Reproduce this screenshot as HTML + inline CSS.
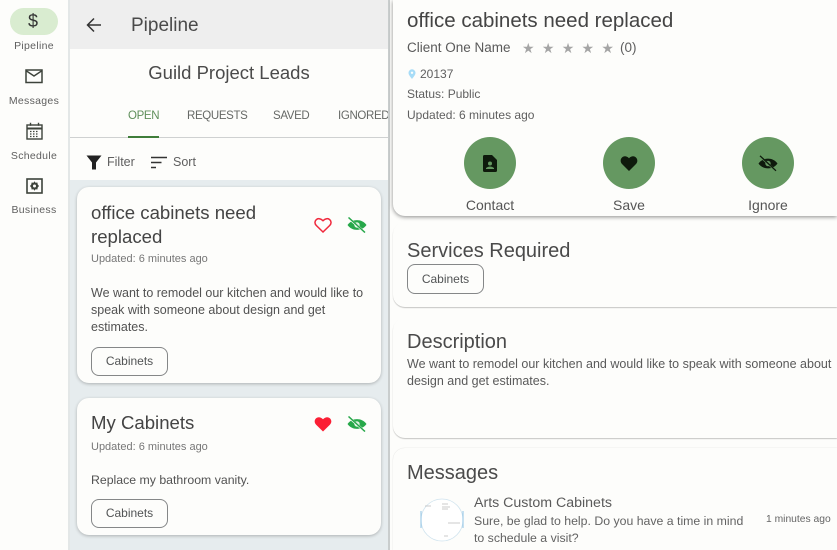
<!DOCTYPE html>
<html><head><meta charset="utf-8"><style>
html,body{margin:0;padding:0;width:837px;height:550px;overflow:hidden;background:#fdfdfb;font-family:"Liberation Sans",sans-serif;color:#444}
div,svg{position:absolute}
#root{left:0;top:0;width:837px;height:550px;overflow:hidden}
.t{white-space:nowrap;line-height:1}
.card{background:#fdfdfb;border-radius:12px;box-shadow:0 1px 3px rgba(0,0,0,.25)}
.chip{border:1px solid #858788;border-radius:8px;box-sizing:border-box;text-align:center;font-size:12px;color:#525455;background:#fdfdfb}
.nav{font-size:10.5px;color:#5f5f5f;width:68px;text-align:center;letter-spacing:.3px}
.circ{width:52px;height:52px;border-radius:50%;background:#659861}
.act{font-size:14px;color:#555;width:100px;text-align:center}
.tab{font-size:11.5px;letter-spacing:-.35px;color:#666966}
</style></head><body>
<div id="root">

<!-- sidebar -->
<div style="left:0;top:0;width:68px;height:550px;background:#fdfdfb"></div>
<div style="left:68px;top:0;width:2px;height:550px;background:#e3e7e7"></div>
<div style="left:10px;top:8px;width:48px;height:27px;border-radius:14px;background:#d9ecd0"></div>
<div class="t" style="left:28px;top:12px;font-size:18px;color:#333;">$</div>
<div class="t nav" style="left:0;top:41px">Pipeline</div>
<svg style="left:25px;top:69px" width="18" height="15" viewBox="0 0 18 15"><rect x="1" y="1" width="16" height="12.5" fill="none" stroke="#3d433b" stroke-width="1.5"/><path d="M1.5 2l7.500 5 7.500-5" fill="none" stroke="#3d433b" stroke-width="1.400"/></svg>
<div class="t nav" style="left:0;top:96px">Messages</div>
<svg style="left:26px;top:122px" width="17" height="18" viewBox="0 0 17 18"><rect x="1" y="3" width="15" height="14" fill="none" stroke="#3d433b" stroke-width="1.400"/><path d="M1 6.500h15" stroke="#3d433b" stroke-width="2"/><path d="M4.500 .8v3M12.500 .8v3" stroke="#3d433b" stroke-width="1.400"/><path d="M4 9.500h9M4 12h9M4 14.500h9" stroke="#3d433b" stroke-width="1.300" stroke-dasharray="1.500 1.500"/></svg>
<div class="t nav" style="left:0;top:151px">Schedule</div>
<svg style="left:26px;top:178px" width="17" height="16" viewBox="0 0 17 16"><rect x="1" y="1" width="15" height="14" fill="none" stroke="#3d433b" stroke-width="1.600"/><path d="M8.500 3.300l1 1.500 1.900-.3.300 1.900 1.300 1.600-1.300 1.600-.3 1.900-1.900-.3-1 1.500-1-1.500-1.900.3-.3-1.900L4 8l1.300-1.600.3-1.900 1.900.3z" fill="#3d433b"/><circle cx="8.500" cy="8" r="1.500" fill="#fdfdfb"/></svg>
<div class="t nav" style="left:0;top:205px">Business</div>

<!-- list column -->
<div style="left:70px;top:0;width:318px;height:550px;background:#e6ecee"></div>
<div style="left:70px;top:0;width:318px;height:49px;background:#eeeeee"></div>
<div style="left:70px;top:49px;width:318px;height:131px;background:#fdfdfb"></div>
<svg style="left:85px;top:16px" width="18" height="18" viewBox="0 0 18 18"><path d="M16 9H2.500M9 2.500L2.500 9l6.500 6.500" fill="none" stroke="#333" stroke-width="1.500"/></svg>
<div class="t" style="left:131px;top:16px;font-size:19px;color:#4a4a4a">Pipeline</div>
<div class="t" style="left:70px;top:64px;width:318px;text-align:center;font-size:18.500px;color:#4a4a4a">Guild Project Leads</div>

<div style="left:70px;top:137px;width:318px;height:1px;background:#cfd1d1"></div>
<div style="left:128px;top:136px;width:31px;height:2px;background:#3f7d3a"></div>
<div class="t tab" style="left:128px;top:111px;color:#5f8f5b">OPEN</div>
<div class="t tab" style="left:187px;top:111px">REQUESTS</div>
<div class="t tab" style="left:273px;top:111px">SAVED</div>
<div style="left:338px;top:106px;width:50px;height:22px;overflow:hidden"><div class="t tab" style="left:0;top:5px">IGNORED</div></div>

<svg style="left:86px;top:155px" width="16" height="15" viewBox="0 0 16 15"><path d="M.5 .5h15L10 7.500V14.500H6V7.500z" fill="#222"/></svg>
<div class="t" style="left:107px;top:156px;font-size:12.500px;color:#5f5f5f">Filter</div>
<svg style="left:151px;top:156px" width="16" height="13" viewBox="0 0 16 13"><path d="M0 1.500h16M0 6.500h10.500M0 11.500h5" stroke="#333" stroke-width="1.500"/></svg>
<div class="t" style="left:173px;top:156px;font-size:12.500px;color:#5f5f5f">Sort</div>

<!-- card 1 -->
<div class="card" style="left:77px;top:187px;width:304px;height:196px"></div>
<div style="left:91px;top:201px;font-size:18.600px;line-height:24px;color:#444;width:200px">office cabinets need replaced</div>
<svg style="left:314px;top:217px" width="18" height="16" viewBox="0 0 18 16"><path d="M9 15L2.200 8.400C-1.500 4.500 3.800-1.500 9 3.700 14.200-1.500 19.500 4.500 15.800 8.400z" fill="none" stroke="#f0283c" stroke-width="1.500"/></svg>
<svg style="left:347px;top:217px" width="20" height="16" viewBox="0 0 20 16"><path d="M.5 8C5 1.500 15 1.500 19.500 8 15 14.500 5 14.500 .5 8z" fill="#27a84a"/><circle cx="10" cy="8" r="2.700" fill="#dff2e2"/><path d="M2 1.500l16 14" stroke="#fdfdfb" stroke-width="2.200"/><path d="M1.500 .5l16.500 15" stroke="#27a84a" stroke-width="1.500"/></svg>
<div class="t" style="left:91px;top:254px;font-size:11px;color:#777">Updated: 6 minutes ago</div>
<div style="left:91px;top:285px;width:282px;font-size:12.500px;line-height:17px;color:#525252">We want to remodel our kitchen and would like to speak with someone about design and get estimates.</div>
<div class="chip" style="left:91px;top:347px;width:77px;height:29px;line-height:27px">Cabinets</div>

<!-- card 2 -->
<div class="card" style="left:77px;top:398px;width:304px;height:137px"></div>
<div class="t" style="left:91px;top:414px;font-size:18.600px;color:#444">My Cabinets</div>
<svg style="left:314px;top:416px" width="18" height="16" viewBox="0 0 18 16"><path d="M9 15.500L2 8.600C-2 4.200 3.800-2 9 3.200 14.200-2 20 4.200 16 8.600z" fill="#fb1f35"/></svg>
<svg style="left:347px;top:416px" width="20" height="16" viewBox="0 0 20 16"><path d="M.5 8C5 1.500 15 1.500 19.500 8 15 14.500 5 14.500 .5 8z" fill="#27a84a"/><circle cx="10" cy="8" r="2.700" fill="#dff2e2"/><path d="M2 1.500l16 14" stroke="#fdfdfb" stroke-width="2.200"/><path d="M1.500 .5l16.500 15" stroke="#27a84a" stroke-width="1.500"/></svg>
<div class="t" style="left:91px;top:442px;font-size:11px;color:#777">Updated: 6 minutes ago</div>
<div class="t" style="left:91px;top:474px;font-size:12.300px;color:#525252">Replace my bathroom vanity.</div>
<div class="chip" style="left:91px;top:499px;width:77px;height:29px;line-height:27px">Cabinets</div>

<!-- divider -->
<div style="left:388px;top:0;width:2px;height:550px;background:#c9cdcd"></div>
<div style="left:390px;top:0;width:447px;height:550px;background:#fdfdfb"></div>

<!-- detail header -->
<div style="left:393px;top:0;width:444px;height:216px;background:#fdfdfb;border-radius:0 0 0 12px;box-shadow:0 1px 4px rgba(0,0,0,.45)"></div>
<div class="t" style="left:407px;top:11px;font-size:20.500px;color:#444">office cabinets need replaced</div>
<div class="t" style="left:407px;top:41px;font-size:13.500px;color:#5a5a5a">Client One Name</div>
<div class="t" style="left:522px;top:41px;font-size:14px;color:#a5a5a5;letter-spacing:7.300px">★★★★★</div>
<div class="t" style="left:620px;top:41px;font-size:13.500px;color:#5f5f5f">(0)</div>
<svg style="left:408px;top:69px" width="8" height="10" viewBox="0 0 8 10"><path d="M4 10C2 7.500 .5 5.800 .5 3.800a3.500 3.500 0 0 1 7 0C7.500 5.800 6 7.500 4 10z" fill="#a7dcf7"/><circle cx="4" cy="3.800" r="1.200" fill="#fdfdfb"/></svg>
<div class="t" style="left:420px;top:68px;font-size:12px;color:#5f5f5f">20137</div>
<div class="t" style="left:407px;top:88px;font-size:12px;color:#5f5f5f">Status: Public</div>
<div class="t" style="left:407px;top:109px;font-size:12px;color:#5f5f5f">Updated: 6 minutes ago</div>

<div class="circ" style="left:464px;top:137px"></div>
<svg style="left:483px;top:155px" width="14" height="17" viewBox="0 0 14 17"><path d="M0 1.500Q0 0 1.500 0H9l5 5v10.500q0 1.500-1.500 1.500h-11Q0 17 0 15.500z" fill="#0e1a0c"/><circle cx="7" cy="8.500" r="2" fill="#659861"/><path d="M3 14v-1q4-3 8 0v1z" fill="#659861"/></svg>
<div class="t act" style="left:440px;top:198px">Contact</div>

<div class="circ" style="left:603px;top:137px"></div>
<svg style="left:620px;top:155px" width="18" height="16" viewBox="0 0 18 16"><path d="M9 16L2 9C-2 4.500 3.800-2 9 3.200 14.200-2 20 4.500 16 9z" fill="#0e1a0c"/></svg>
<div class="t act" style="left:579px;top:198px">Save</div>

<div class="circ" style="left:742px;top:137px"></div>
<svg style="left:758px;top:155px" width="20" height="17" viewBox="0 0 20 17"><path d="M.5 8.500C5 2 15 2 19.500 8.500 15 15 5 15 .5 8.500z" fill="#0e1a0c"/><circle cx="10" cy="8.500" r="2.700" fill="#659861"/><path d="M2.500 1.700l15 14" stroke="#659861" stroke-width="2"/><path d="M2 .8l16 15" stroke="#0e1a0c" stroke-width="1.300"/></svg>
<div class="t act" style="left:718px;top:198px">Ignore</div>

<!-- services -->
<div style="left:393px;top:222px;width:444px;height:85px;background:#fdfdfb;border-radius:12px 0 0 12px;box-shadow:0 1px 1px rgba(0,0,0,.22)"></div>
<div class="t" style="left:407px;top:241px;font-size:20px;color:#4a4a4a">Services Required</div>
<div class="chip" style="left:407px;top:264px;width:77px;height:30px;line-height:28px">Cabinets</div>

<!-- description -->
<div style="left:393px;top:318px;width:444px;height:120px;background:#fdfdfb;border-radius:12px 0 0 12px;box-shadow:0 1px 1px rgba(0,0,0,.22)"></div>
<div class="t" style="left:407px;top:332px;font-size:20px;color:#4a4a4a">Description</div>
<div style="left:407px;top:356px;width:430px;font-size:12.500px;line-height:17px;color:#5a5a5a">We want to remodel our kitchen and would like to speak with someone about design and get estimates.</div>

<!-- messages -->
<div style="left:393px;top:448px;width:444px;height:102px;background:#fdfdfb;border-radius:12px 0 0 0;box-shadow:0 0 1px rgba(0,0,0,.2)"></div>
<div class="t" style="left:407px;top:463px;font-size:20px;color:#4a4a4a">Messages</div>
<svg style="left:420px;top:498px" width="44" height="44" viewBox="0 0 44 44"><circle cx="22" cy="22" r="21" fill="#fff" stroke="#cfe3ee" stroke-width=".8"/><path d="M1 13v17" stroke="#8fc3e6" stroke-width="1"/><path d="M43 13v17" stroke="#8fc3e6" stroke-width="1"/><path d="M22 6h6M22 9h8M22 11h6M5 8h6M28 25h12M24 38h4" stroke="#bbb" stroke-width=".8"/></svg>
<div class="t" style="left:474px;top:496px;font-size:14.200px;color:#5a5a5a">Arts Custom Cabinets</div>
<div style="left:474px;top:513px;width:275px;height:34px;font-size:12.300px;line-height:17px;color:#636363">Sure, be glad to help. Do you have a time in mind to schedule a visit?</div>
<div class="t" style="left:766px;top:515px;font-size:10.300px;color:#666">1 minutes ago</div>

</div>
</body></html>
